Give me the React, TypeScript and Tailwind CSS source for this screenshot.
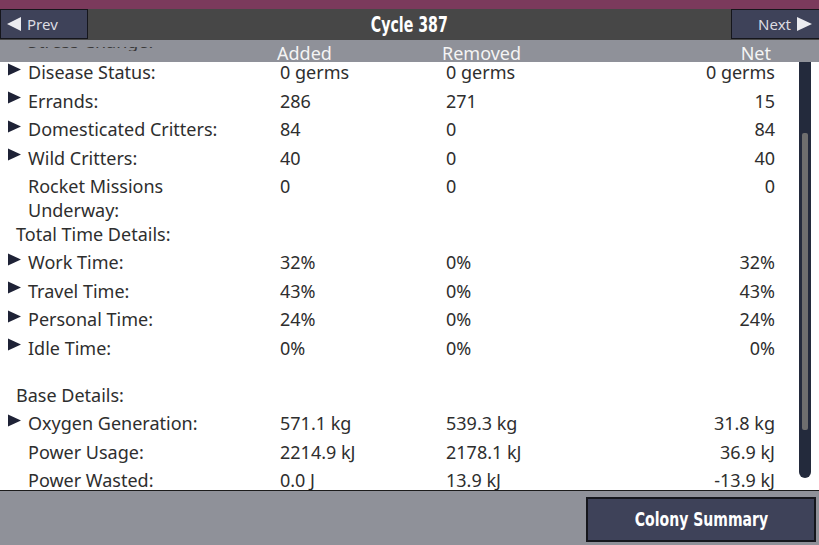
import React from "react";

type Row =
  | { kind: "data"; label: React.ReactNode; a: string; r: string; n: string; arrow?: boolean; tall?: boolean }
  | { kind: "head"; label: string }
  | { kind: "gap" };

const rows: Row[] = [
  { kind: "data", label: "Disease Status:", a: "0 germs", r: "0 germs", n: "0 germs", arrow: true },
  { kind: "data", label: "Errands:", a: "286", r: "271", n: "15", arrow: true },
  { kind: "data", label: "Domesticated Critters:", a: "84", r: "0", n: "84", arrow: true },
  { kind: "data", label: "Wild Critters:", a: "40", r: "0", n: "40", arrow: true },
  {
    kind: "data",
    label: (
      <>
        Rocket Missions
        <br />
        Underway:
      </>
    ),
    a: "0",
    r: "0",
    n: "0",
    tall: true,
  },
  { kind: "head", label: "Total Time Details:" },
  { kind: "data", label: "Work Time:", a: "32%", r: "0%", n: "32%", arrow: true },
  { kind: "data", label: "Travel Time:", a: "43%", r: "0%", n: "43%", arrow: true },
  { kind: "data", label: "Personal Time:", a: "24%", r: "0%", n: "24%", arrow: true },
  { kind: "data", label: "Idle Time:", a: "0%", r: "0%", n: "0%", arrow: true },
  { kind: "gap" },
  { kind: "head", label: "Base Details:" },
  { kind: "data", label: "Oxygen Generation:", a: "571.1 kg", r: "539.3 kg", n: "31.8 kg", arrow: true },
  { kind: "data", label: "Power Usage:", a: "2214.9 kJ", r: "2178.1 kJ", n: "36.9 kJ" },
  { kind: "data", label: "Power Wasted:", a: "0.0 J", r: "13.9 kJ", n: "-13.9 kJ" },
];

function Tri() {
  return (
    <svg width="13" height="13" viewBox="0 0 13 13" className="block">
      <polygon points="0,0.5 13,6.5 0,12.5" fill="#1e2236" />
    </svg>
  );
}

function LeftTri() {
  return (
    <svg width="14" height="14" viewBox="0 0 14 14" className="block">
      <polygon points="14,0 0,7 14,14" fill="#ececf0" />
    </svg>
  );
}

function RightTri() {
  return (
    <svg width="15" height="14" viewBox="0 0 15 14" className="block">
      <polygon points="0,0 15,7 0,14" fill="#ececf0" />
    </svg>
  );
}

const titleFont = { fontFamily: '"DejaVu Sans Condensed", "DejaVu Sans", sans-serif' };

export default function App() {
  return (
    <div
      className="w-[819px] h-[545px] flex flex-col overflow-hidden bg-white text-[#2e2e2e]"
      style={{ fontFamily: '"Noto Sans", "Open Sans", sans-serif' }}
    >
      <div className="h-[9px] bg-[#7b3a5c] shrink-0" />
      <div className="h-[31px] bg-[#474747] shrink-0 flex items-center justify-between">
        <button className="w-[88px] h-[30px] mt-[-1px] bg-[#3e4259] border-[1.5px] border-[#15161c] flex items-center pl-[6px] gap-[6px] text-[15px] text-[#dcdce2]">
          <LeftTri />
          <span>Prev</span>
        </button>
        <div
          className="text-white text-[21px] leading-[24px] font-bold inline-block scale-x-[0.75]"
          style={titleFont}
        >
          Cycle 387
        </div>
        <button className="w-[88px] h-[30px] mt-[-1px] bg-[#3e4259] border-[1.5px] border-r-0 border-[#15161c] flex items-center justify-end pr-[7px] gap-[6px] text-[15px] text-[#dcdce2]">
          <span>Next</span>
          <RightTri />
        </button>
      </div>

      <div className="relative h-[450px] shrink-0 overflow-hidden">
        <div className="absolute left-0 top-0 w-full h-[22px] bg-[#8f9199] z-10 text-[18px] text-[#f4f4f4]">
          <div className="absolute left-[28px] top-[7px] h-[4px] overflow-hidden text-[#3a3a3a] leading-[24px]">
            <div className="mt-[-18px] whitespace-nowrap">Stress Change:</div>
          </div>
          <div className="flex h-full items-end">
            <div className="w-[277px]" />
            <div className="w-[165px] leading-[18px]">Added</div>
            <div className="flex-1 leading-[18px]">Removed</div>
            <div className="w-[80px] pr-[48px] text-right leading-[18px]">Net</div>
          </div>
        </div>

        <div className="absolute right-[8px] top-[22px] w-[12px] h-[416px] bg-[#232a3c] rounded-b-[6px] z-0">
          <div className="ml-[3px] mt-[71px] w-[6px] h-[297px] bg-[#6e6e6e] rounded-[2px]" />
        </div>

        <div className="pt-[18px] text-[18px] leading-[24px]">
          {rows.map((row, i) => {
            if (row.kind === "gap") return <div key={i} className="h-[21px]" />;
            if (row.kind === "head")
              return (
                <div key={i} className="h-[26px] pl-[16px]">
                  {row.label}
                </div>
              );
            return (
              <div
                key={i}
                className={row.tall ? "h-[50px] pt-[2px] flex items-start" : "h-[28.5px] flex items-center"}
              >
                <div className={row.tall ? "w-[28px] pl-[8px] shrink-0" : "w-[28px] pl-[8px] shrink-0 mt-[-6px]"}>
                  {row.arrow ? <Tri /> : null}
                </div>
                <div className="w-[252px] shrink-0">{row.label}</div>
                <div className="w-[166px] shrink-0">{row.a}</div>
                <div className="flex-1">{row.r}</div>
                <div className="w-[200px] pr-[44px] text-right">{row.n}</div>
              </div>
            );
          })}
        </div>
      </div>

      <div className="flex-1 bg-[#8f9199] border-t-[1.5px] border-[#1c1c1c] flex justify-end items-start pt-[5.5px] pr-[3px]">
        <button className="w-[230px] h-[45px] bg-[#3e4259] border-2 border-[#15161c] flex items-center justify-center">
          <span
            className="text-white text-[20px] font-bold inline-block scale-x-[0.78] whitespace-nowrap"
            style={titleFont}
          >
            Colony Summary
          </span>
        </button>
      </div>
    </div>
  );
}
